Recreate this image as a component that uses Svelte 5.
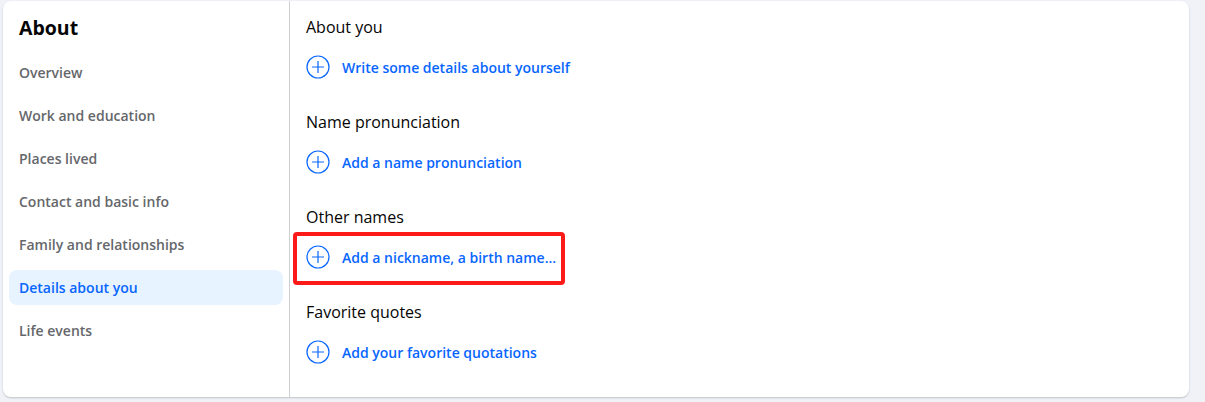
<script>
  const tabs = ['Overview', 'Work and education', 'Places lived', 'Contact and basic info', 'Family and relationships', 'Details about you', 'Life events'];
  const sections = [
    { title: 'About you', action: 'Write some details about yourself' },
    { title: 'Name pronunciation', action: 'Add a name pronunciation' },
    { title: 'Other names', action: 'Add a nickname, a birth name...', marked: true },
    { title: 'Favorite quotes', action: 'Add your favorite quotations' }
  ];
  let active = $state('Details about you');
</script>

<div class="page">
  <div class="card">
    <aside class="sidebar">
      <h2>About</h2>
      <nav>
        {#each tabs as tab}
          <button class="tab" class:active={active === tab} onclick={() => (active = tab)}>{tab}</button>
        {/each}
      </nav>
    </aside>
    <main class="content">
      {#each sections as s}
        <section>
          <h3>{s.title}</h3>
          <div class="action" class:marked={s.marked}>
            <svg width="24" height="24" viewBox="0 0 24 24" fill="none" stroke="#0866ff" stroke-width="1.2">
              <circle cx="12" cy="12" r="11" />
              <path d="M12 6v12M6 12h12" />
            </svg>
            <span>{s.action}</span>
          </div>
        </section>
      {/each}
    </main>
  </div>
</div>

<style>
  :global(body) {
    margin: 0;
    background: #f0f2f7;
    font-family: "Open Sans", "Liberation Sans", sans-serif;
  }

  .page {
    height: 402px;
    overflow: hidden;
    box-sizing: border-box;
    padding: 1px 16px 0 3px;
  }

  .card {
    display: flex;
    height: 396px;
    background: #fff;
    border-radius: 8px;
    box-shadow: 0 1px 2px rgba(0, 0, 0, 0.2);
  }

  .sidebar {
    width: 287px;
    flex: none;
    box-sizing: border-box;
    border-right: 1px solid #ced0d4;
    padding: 0 6px;
  }

  h2 {
    font-size: 19.5px;
    font-weight: 700;
    color: #050505;
    margin: 0;
    padding: 13px 10px 0;
    height: 41px;
  }

  nav {
    display: flex;
    flex-direction: column;
    gap: 8px;
  }

  .tab {
    all: unset;
    height: 35px;
    line-height: 35px;
    padding: 0 10px;
    border-radius: 8px;
    font-size: 14px;
    font-weight: 600;
    color: #65676b;
    cursor: pointer;
  }

  .tab.active {
    background: #e7f3ff;
    color: #0866ff;
  }

  .content {
    flex: 1;
    padding-left: 16px;
  }

  section {
    height: 95px;
  }

  h3 {
    font-size: 16px;
    font-weight: 500;
    color: #050505;
    margin: 0;
    padding-top: 15px;
    line-height: 22px;
  }

  .action {
    display: flex;
    align-items: center;
    gap: 12px;
    margin-top: 17px;
    height: 24px;
    font-size: 14px;
    font-weight: 600;
    color: #0866ff;
  }

  .marked {
    position: relative;
    width: fit-content;
  }

  /* red annotation box drawn over the row */
  .marked::after {
    content: '';
    position: absolute;
    inset: -13px -9px -16px -13px;
    border: 4px solid #ff1a1a;
    border-radius: 4px;
    pointer-events: none;
  }
</style>
